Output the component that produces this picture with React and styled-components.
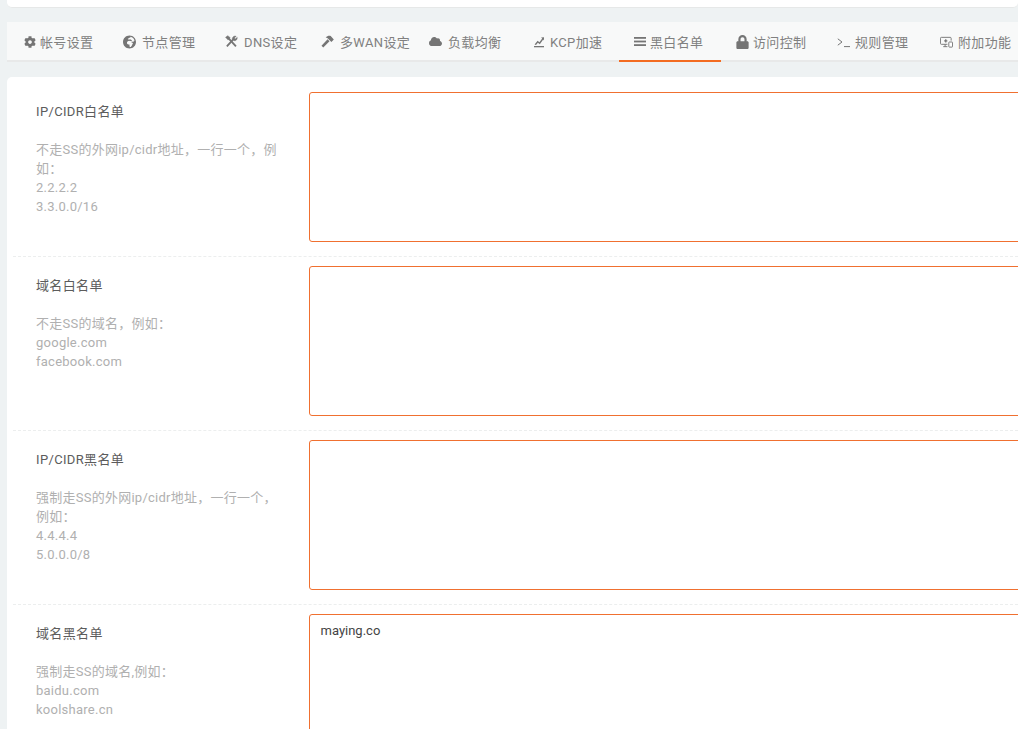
import React from "react";
import styled, { createGlobalStyle } from "styled-components";
import { FaCog, FaGlobeAfrica, FaCloud, FaLock } from "react-icons/fa";

const GlobalStyle = createGlobalStyle`
  html, body {
    margin: 0;
    padding: 0;
    height: 100%;
    overflow: hidden;
    background: #eef2f3;
    font-family: Roboto, "Noto Sans CJK SC", sans-serif;
  }
`;

const Page = styled.div`
  width: 1018px;
  height: 729px;
  overflow: hidden;
  padding-left: 7px;
  box-sizing: border-box;
`;

const TopCard = styled.div`
  height: 7px;
  background: #fff;
  border-bottom: 1px solid #e6e8e8;
  border-radius: 0 0 5px 5px;
`;

const TabBar = styled.ul`
  display: flex;
  list-style: none;
  margin: 14px 0 15px;
  padding: 0;
  height: 40px;
  box-sizing: border-box;
  background: #f8f9f9;
  border-bottom: 2px solid #e8e9e9;
`;

const Tab = styled.li`
  display: flex;
  align-items: center;
  flex: none;
  width: ${(p) => p.$width}px;
  height: 40px;
  box-sizing: border-box;
  padding-left: ${(p) => p.$left}px;
  font-size: 13px;
  letter-spacing: 0.35px;
  white-space: nowrap;
  color: #808080;
  border-bottom: 2px solid ${(p) => (p.$active ? "#f36c21" : "transparent")};
`;

const TabIcon = styled.span`
  display: flex;
  align-items: center;
  justify-content: center;
  flex: none;
  width: 13px;
  height: 14px;
  margin-top: 1px;
  margin-right: ${(p) => p.$gap}px;
  color: #757575;
  font-size: ${(p) => p.$size}px;
`;

const Card = styled.div`
  background: #fff;
  border-radius: 5px 0 0 0;
  padding: 15px 0 0 6px;
`;

const Row = styled.div`
  display: flex;
  height: 165px;
  margin-bottom: 9px;
  box-sizing: border-box;
  border-bottom: 1px dashed #eceeee;
`;

const LabelCol = styled.div`
  flex: none;
  width: 296px;
  box-sizing: border-box;
  padding: 10px 29px 0 23px;
`;

const Title = styled.div`
  font-size: 13px;
  line-height: 19px;
  letter-spacing: 0.35px;
  color: #5c5c5c;
  margin-bottom: 19px;
`;

const Hint = styled.div`
  font-size: 13px;
  line-height: 19px;
  letter-spacing: 0.25px;
  color: #b0b0b0;
`;

const Area = styled.textarea`
  flex: none;
  display: block;
  width: 760px;
  height: 150px;
  box-sizing: border-box;
  margin: 0;
  padding: 8px 10.5px;
  border: 1px solid #f07030;
  border-radius: 3px;
  background: #fff;
  outline: none;
  resize: none;
  font-family: Roboto, "Noto Sans CJK SC", sans-serif;
  font-size: 13px;
  line-height: 16px;
  color: #444;
`;

const ToolsIcon = () => (
  <svg width="14" height="13" viewBox="0 0 14 13" fill="none" stroke="currentColor">
    <path d="M3.4 2.6 11.8 11.8" strokeWidth="2" />
    <path d="M.6 2 3 .2 5.6 2.4 3.4 5z" fill="currentColor" strokeWidth=".5" />
    <path d="M2 11.8 9.4 3.8" strokeWidth="2" />
    <path d="M7.8 3.6C8 1.4 10 0 12 .8L10.2 2.6 11 3.8 13.2 2C13.6 4.2 11.8 6.2 9.6 5.6z" fill="currentColor" strokeWidth=".4" />
  </svg>
);

const HammerIcon = () => (
  <svg width="15" height="15" viewBox="0 0 15 15" fill="currentColor">
    <path d="M.6 12.4 7.6 5 9.8 7.2 2.6 14.4z" />
    <path d="M5.4 2.8C7.2.8 9.8.4 11.2 1.2L14.8 5.2 12 8.2 7.6 3.8C6.9 3.2 6.2 3 5.4 2.8z" />
  </svg>
);

const ChartIcon = () => (
  <svg width="12" height="12" viewBox="0 0 12 12" fill="currentColor">
    <rect x="1" y="10" width="10" height="1.3" />
    <path d="M1.6 8.4 4.6 4.8 6.4 6.2 9.2 2.4 8 1.6 11 1.2 11 4.4 10.2 3.4 6.8 8.2 4.9 6.8 3 9z" />
  </svg>
);

const BarsIcon = () => (
  <svg width="12" height="11" viewBox="0 0 12 11" fill="currentColor">
    <rect y="1" width="12" height="1.8" />
    <rect y="4.6" width="12" height="1.8" />
    <rect y="8.2" width="12" height="1.8" />
  </svg>
);

const TerminalIcon = () => (
  <svg width="13" height="12" viewBox="0 0 13 12" fill="none" stroke="currentColor" strokeWidth="1">
    <path d="M.8 2.8 5 6 .8 9.2" />
    <path d="M7 10.6H13" />
  </svg>
);

const AddonIcon = () => (
  <svg width="14" height="12" viewBox="0 0 14 12" fill="none" stroke="currentColor">
    <path d="M8 8.5H1.5a1 1 0 0 1-1-1V2a1 1 0 0 1 1-1h9.5a1 1 0 0 1 1 1v2.5" />
    <path d="M3.5 11H8M5.5 8.5V11" />
    <rect x="9.5" y="6" width="4" height="5.5" rx=".6" fill="#fff" />
    <path d="M4.5 4.8h3.4M6.2 3.1v3.4" strokeWidth="1.4" />
  </svg>
);

const tabs = [
  { label: "帐号设置", icon: <FaCog />, size: 12, width: 100, left: 16, gap: 4 },
  { label: "节点管理", icon: <FaGlobeAfrica />, size: 14, width: 102, left: 16, gap: 6 },
  { label: "DNS设定", icon: <ToolsIcon />, size: 13, width: 96, left: 16, gap: 6 },
  { label: "多WAN设定", icon: <HammerIcon />, size: 14, width: 108, left: 16, gap: 6 },
  { label: "负载均衡", icon: <FaCloud />, size: 15, width: 103, left: 16, gap: 6 },
  { label: "KCP加速", icon: <ChartIcon />, size: 12, width: 103, left: 16, gap: 5 },
  { label: "黑白名单", icon: <BarsIcon />, size: 12, width: 102, left: 14, gap: 4, active: true },
  { label: "访问控制", icon: <FaLock />, size: 14, width: 101, left: 15, gap: 4 },
  { label: "规则管理", icon: <TerminalIcon />, size: 12, width: 102, left: 15, gap: 5 },
  { label: "附加功能", icon: <AddonIcon />, size: 12, width: 102, left: 16, gap: 5 },
];

const rows = [
  {
    title: "IP/CIDR白名单",
    hint: ["不走SS的外网ip/cidr地址，一行一个，例如：", "2.2.2.2", "3.3.0.0/16"],
    value: "",
  },
  {
    title: "域名白名单",
    hint: ["不走SS的域名，例如：", "google.com", "facebook.com"],
    value: "",
  },
  {
    title: "IP/CIDR黑名单",
    hint: ["强制走SS的外网ip/cidr地址，一行一个，例如：", "4.4.4.4", "5.0.0.0/8"],
    value: "",
  },
  {
    title: "域名黑名单",
    hint: ["强制走SS的域名,例如：", "baidu.com", "koolshare.cn"],
    value: "maying.co",
  },
];

export default function App() {
  return (
    <Page>
      <GlobalStyle />
      <TopCard />
      <TabBar>
        {tabs.map((tab) => (
          <Tab key={tab.label} $width={tab.width} $left={tab.left} $active={tab.active}>
            <TabIcon $gap={tab.gap} $size={tab.size}>{tab.icon}</TabIcon>
            {tab.label}
          </Tab>
        ))}
      </TabBar>
      <Card>
        {rows.map((row) => (
          <Row key={row.title}>
            <LabelCol>
              <Title>{row.title}</Title>
              {row.hint.map((line) => (
                <Hint key={line}>{line}</Hint>
              ))}
            </LabelCol>
            <Area defaultValue={row.value} />
          </Row>
        ))}
      </Card>
    </Page>
  );
}
